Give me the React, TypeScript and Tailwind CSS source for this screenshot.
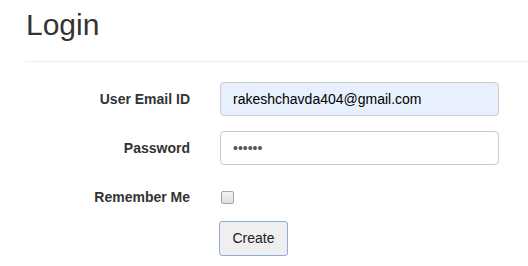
import React from 'react'

const font = { fontFamily: '"Liberation Sans", Arial, sans-serif' }

export default function App() {
  return (
    <div className="w-[528px] h-[266px] bg-white overflow-hidden text-[#333]" style={font}>
      <div className="pl-[25px]">
        {/* Page header */}
        <h2 className="pt-[8px] pl-[1px] text-[30px] leading-[33px] font-normal text-[#333]">Login</h2>
        <div className="mt-[20px] h-px bg-[#eee] w-[520px]" />

        <form className="mt-[20px]" onSubmit={e => e.preventDefault()}>
          {/* Email */}
          <div className="flex items-center">
            <label className="w-[165px] text-right text-[14px] font-bold text-[#333]">User Email ID</label>
            <input
              type="email"
              readOnly
              defaultValue="rakeshchavda404@gmail.com"
              className="ml-[30px] w-[279px] h-[34px] px-[12px] rounded-[4px] border border-[#ccc] bg-[#e8f0fe] text-[14px] text-black outline-none"
              style={font}
            />
          </div>

          {/* Password */}
          <div className="flex items-center mt-[15px]">
            <label className="w-[165px] text-right text-[14px] font-bold text-[#333]">Password</label>
            <input
              type="password"
              readOnly
              defaultValue="123456"
              className="ml-[30px] w-[279px] h-[34px] px-[12px] rounded-[4px] border border-[#ccc] bg-white text-[14px] text-[#555] outline-none"
              style={font}
            />
          </div>

          {/* Remember */}
          <div className="flex items-center mt-[22px]">
            <label className="w-[165px] text-right text-[14px] font-bold text-[#333]">Remember Me</label>
            <span className="ml-[31px] w-[13px] h-[13px] rounded-[2px] border border-[#a6a6a6] bg-gradient-to-b from-[#f4f4f4] to-[#dedede]" />
          </div>

          {/* Submit */}
          <div className="mt-[13px] pl-[194px]">
            <button
              type="submit"
              className="h-[35px] w-[69px] rounded-[3px] border border-[#8fabd6] bg-[#efefef] text-[14px] text-[#222]"
              style={font}
            >
              Create
            </button>
          </div>
        </form>
      </div>
    </div>
  )
}
